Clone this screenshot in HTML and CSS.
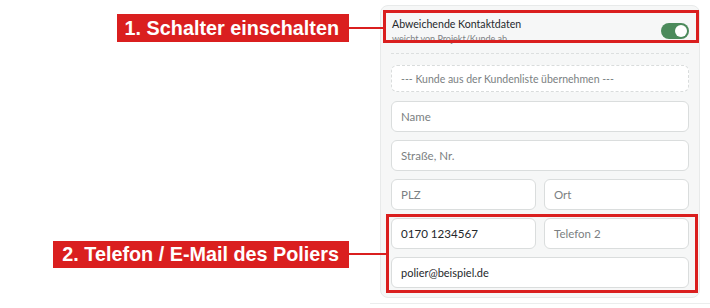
FILE: index.html
```html
<!DOCTYPE html>
<html lang="de">
<head>
    <meta charset="UTF-8">
    <meta name="viewport" content="width=device-width, initial-scale=1.0">
    <title>Abweichende Kontaktdaten</title>
    <link rel="stylesheet" href="styles.css">
</head>
<body>
    <div class="stage">
        <div class="card">
            <div class="card-head">
                <div class="head-text">
                    <div class="head-title">Abweichende Kontaktdaten</div>
                    <div class="head-sub">weicht von Projekt/Kunde ab</div>
                </div>
                <div class="toggle on"><span class="knob"></span></div>
            </div>

            <div class="form">
                <div class="pick">--- Kunde aus der Kundenliste übernehmen ---</div>
                <div class="field placeholder">Name</div>
                <div class="field placeholder">Straße, Nr.</div>
                <div class="row">
                    <div class="field placeholder">PLZ</div>
                    <div class="field placeholder">Ort</div>
                </div>
                <div class="row">
                    <div class="field filled phone">0170 1234567</div>
                    <div class="field placeholder">Telefon 2</div>
                </div>
                <div class="field filled email">polier@beispiel.de</div>
            </div>
        </div>
        <div class="rule"></div>

        <!-- annotations -->
        <div class="mark mark-1"></div>
        <div class="mark mark-2"></div>
        <div class="callout callout-1">1. Schalter einschalten</div>
        <div class="callout callout-2">2. Telefon / E-Mail des Poliers</div>
        <div class="leader leader-1"></div>
        <div class="leader leader-2"></div>
    </div>
</body>
</html>
```

FILE: styles.css
```css
body {
    margin: 0;
    background-color: #ffffff;
    font-family: 'Lato', 'Noto Sans', sans-serif;
    color: #2b2f33;
}

.stage {
    position: relative;
    width: 710px;
    height: 308px;
    overflow: hidden;
}

.card {
    box-sizing: border-box;
    width: 320px;
    margin: 5px 0 0 380px;
    padding: 0 10px 9px 10px;
    background-color: #f6f7f7;
    border: 1px solid #e8eaea;
    border-radius: 8px;
}

.card-head {
    display: flex;
    justify-content: space-between;
    align-items: center;
    height: 33px;
    padding: 9px 0 5px 1px;
    border-bottom: 1px dashed #dcdfdf;
}

.head-text {
    margin-top: -2px;
}

.head-title {
    font-size: 10.6px;
    line-height: 15px;
    color: #25292c;
}

.head-sub {
    margin-top: 1px;
    font-size: 9px;
    line-height: 12px;
    color: #7d8184;
}

.toggle {
    position: relative;
    width: 28px;
    height: 16px;
    margin-top: -2px;
    border-radius: 8px;
    background-color: #4b8a5b;
}

.toggle .knob {
    position: absolute;
    top: 2px;
    right: 2px;
    width: 12px;
    height: 12px;
    border-radius: 50%;
    background-color: #ffffff;
}

.form {
    display: flex;
    flex-direction: column;
    gap: 8px;
    padding-top: 11px;
}

.pick {
    box-sizing: border-box;
    height: 27px;
    margin-bottom: 1px;
    padding: 0 9px;
    display: flex;
    align-items: center;
    font-size: 10.5px;
    color: #7b7f82;
    background-color: #ffffff;
    border: 1px dashed #d9dcdc;
    border-radius: 6px;
}

.row {
    display: grid;
    grid-template-columns: 1fr 1fr;
    gap: 8px;
}

.field {
    box-sizing: border-box;
    height: 31px;
    padding: 0 9px;
    display: flex;
    align-items: center;
    font-size: 11.5px;
    background-color: #ffffff;
    border: 1px solid #dadddd;
    border-radius: 6px;
}

.field.placeholder {
    color: #7b7f82;
}

.field.filled {
    color: #24282b;
}

.field.phone {
    font-size: 11.6px;
}

.field.email {
    font-size: 11px;
}

.rule {
    height: 1px;
    margin: 5px 0 0 370px;
    background-color: #ebeded;
}

/* annotations */
.mark {
    position: absolute;
    box-sizing: border-box;
    border: 3px solid #da1f1f;
}

.mark-1 {
    left: 383px;
    top: 10px;
    width: 316px;
    height: 33px;
}

.mark-2 {
    left: 386px;
    top: 214px;
    width: 312px;
    height: 79px;
}

.callout {
    position: absolute;
    right: 361px;
    height: 28px;
    padding: 0 10px 0 8px;
    display: flex;
    align-items: center;
    background-color: #da1f1f;
    color: #ffffff;
    font-family: 'Liberation Sans', Arial, sans-serif;
    font-weight: bold;
    font-size: 19.8px;
    white-space: nowrap;
}

.callout-1 {
    top: 14px;
}

.callout-2 {
    top: 241px;
    height: 27px;
    padding-left: 9px;
}

.leader {
    position: absolute;
    left: 349px;
    height: 2px;
    background-color: #da1f1f;
}

.leader-1 {
    top: 27px;
    width: 35px;
}

.leader-2 {
    top: 253px;
    width: 38px;
}
```
